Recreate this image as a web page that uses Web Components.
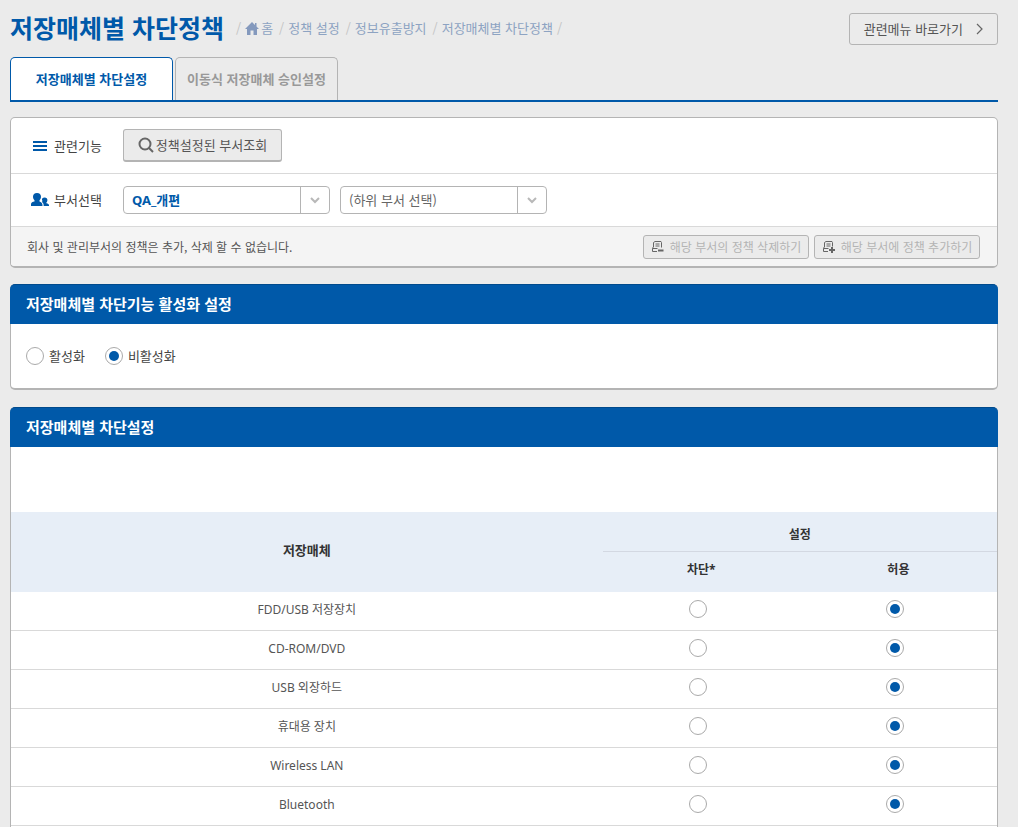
<!DOCTYPE html>
<html lang="ko">
<head>
<meta charset="utf-8">
<meta name="viewport" content="width=device-width, initial-scale=1">
<title>저장매체별 차단정책</title>
<style>
  :root {
    --blue: #0059a9;
    --page: #ebebeb;
    --line: #b4b4b4;
    --rule: #d9d9d9;
    --text: #555;
    --latin-first: "Noto Sans", "Noto Sans CJK KR", sans-serif;
  }
  * { box-sizing: border-box; }
  body {
    margin: 0;
    background: var(--page);
    color: var(--text);
    font: 13px/20px "Noto Sans CJK KR", "Noto Sans", sans-serif;
  }
</style>
</head>
<body>
<policy-page></policy-page>

<script>
const define = (name, html, setup) => {
  const template = document.createElement('template');
  template.innerHTML = `<style>
    *, :host { box-sizing: border-box; }
    button, select, input { font: inherit; color: inherit; margin: 0; }
    svg { display: block; flex: none; }
    input[type=radio] {
      appearance: none; flex: none; width: 18px; height: 18px; padding: 3px;
      border: 1px solid #aaa; border-radius: 50%; background: #fff;
    }
    input[type=radio]:checked::before {
      content: ""; display: block; width: 10px; height: 10px; border-radius: 50%; background: var(--blue);
    }
  </style>` + html;
  customElements.define(name, class extends HTMLElement {
    constructor() {
      super();
      this.attachShadow({ mode: 'open' }).append(template.content.cloneNode(true));
    }
    connectedCallback() { if (setup) setup(this.shadowRoot, this); }
  });
};

define('crumb-trail', `
  <style>
    :host { display: block; color: #8da3c2; }
    ol { display: flex; gap: 6px; margin: 0; padding: 0; list-style: none; }
    li { display: flex; align-items: center; gap: 4px; white-space: nowrap; }
    li::before, li:last-child::after { content: "/"; color: #c4c4c4; }
    a { display: flex; align-items: center; gap: 2px; color: inherit; text-decoration: none; }
  </style>
  <nav aria-label="현재 위치"><ol>
    <li><a href="#"><svg width="14" height="13" viewBox="0 0 14 13" fill="#8499bd"><path d="M7 0 0 7h2v6h3.500V8.500h3V13H12V7h2L11.500 4.500V1H10v2z"/></svg>홈</a></li>
    <li><a href="#">정책 설정</a></li>
    <li><a href="#">정보유출방지</a></li>
    <li><a href="#">저장매체별 차단정책</a></li>
  </ol></nav>`);

define('page-header', `
  <style>
    :host { display: flex; align-items: center; gap: 12px; height: 32px; }
    h1 { margin: 0; font-size: 25px; line-height: 32px; font-weight: 700; color: var(--blue); white-space: nowrap; }
    h1 { padding-bottom: 4px; }
    crumb-trail { padding-bottom: 2px; }
    button {
      display: flex; align-items: center; gap: 13px; height: 32px; margin-left: auto; padding: 0 14px;
      border: 1px solid var(--line); border-radius: 3px; background: none; white-space: nowrap;
    }
  </style>
  <h1>저장매체별 차단정책</h1>
  <crumb-trail></crumb-trail>
  <button type="button">관련메뉴 바로가기<svg width="7" height="12" viewBox="0 0 7 12" fill="none" stroke="#666" stroke-width="1.200"><path d="m1 1 5 5-5 5"/></svg></button>`);

define('tab-strip', `
  <style>
    :host { display: flex; gap: 2px; height: 45px; border-bottom: 2px solid var(--blue); }
    button {
      width: 163px; height: 43px; padding: 0; border: 1px solid var(--line); border-bottom: 0; border-radius: 5px 5px 0 0;
      background: var(--page); color: #999; font-weight: 700; white-space: nowrap;
    }
    button[aria-selected=true] { border-color: var(--blue); background: #fff; color: var(--blue); }
  </style>
  <button type="button" role="tab" aria-selected="true">저장매체별 차단설정</button>
  <button type="button" role="tab" aria-selected="false">이동식 저장매체 승인설정</button>`,
  (root, host) => host.setAttribute('role', 'tablist'));

define('panel-card', `
  <style>
    :host {
      display: block; overflow: hidden; background: #fff;
      border: 1px solid var(--line); border-bottom-width: 2px; border-radius: 5px;
    }
  </style>
  <slot></slot>`);

define('titled-card', `
  <style>
    :host { display: flex; flex-direction: column; }
    h2 {
      margin: 0; padding: 0 16px 2px; border-top: 1px solid #004a8c; border-radius: 5px 5px 0 0;
      background: var(--blue); color: #fff; font-size: 15px; line-height: 37px; font-weight: 700;
    }
    div { flex: 1; border: 1px solid var(--line); border-width: 0 1px 2px; border-radius: 0 0 5px 5px; background: #fff; }
    :host([open-end]) div { border-bottom: 0; border-radius: 0; }
  </style>
  <h2></h2><div><slot></slot></div>`,
  (root, host) => { root.querySelector('h2').textContent = host.getAttribute('heading'); });

define('select-box', `
  <style>
    :host { display: block; position: relative; width: 207px; }
    select {
      appearance: none; display: block; width: 100%; height: 28px; padding: 0 36px 0 8px;
      border: 1px solid var(--line); border-radius: 4px; background: #fff; color: #666;
    }
    :host([strong]) select { color: var(--blue); font-weight: 700; font-family: var(--latin-first); }
    span {
      position: absolute; inset: 1px 1px 1px auto; width: 29px; display: grid; place-items: center;
      border-left: 1px solid var(--line); pointer-events: none;
    }
  </style>
  <select><option></option></select>
  <span><svg width="10" height="7" viewBox="0 0 10 7" fill="none" stroke="#b8b8b8" stroke-width="2"><path d="m1 1 4 4 4-4"/></svg></span>`,
  (root, host) => {
    root.querySelector('select').setAttribute('aria-label', host.getAttribute('label'));
    root.querySelector('option').textContent = host.getAttribute('value');
  });

define('department-panel', `
  <style>
    :host { display: block; }
    .row { display: flex; align-items: center; gap: 10px; padding: 0 20px; border-bottom: 1px solid var(--rule); }
    .tools { height: 56px; }
    .pick { height: 53px; }
    .name { display: flex; align-items: center; gap: 5px; width: 82px; white-space: nowrap; color: #444; }
    .search {
      display: flex; align-items: center; justify-content: center; gap: 2px; width: 159px; height: 33px; padding: 0;
      border: 1px solid var(--line); border-bottom-width: 2px; border-radius: 3px; background: var(--page); white-space: nowrap;
    }
    .foot {
      display: flex; align-items: center; gap: 5px; height: 39px; padding: 0 17px 0 16px;
      background: #f4f4f4; font-size: 12px;
    }
    p { margin: 0 auto 0 0; }
    .foot button {
      display: flex; align-items: center; justify-content: center; gap: 6px; width: 166px; height: 24px; padding: 0;
      border: 1px solid var(--line); border-radius: 3px; background: var(--page); color: #b4b4b4; white-space: nowrap;
    }
  </style>
  <panel-card>
    <div class="row tools">
      <span class="name"><svg width="18" height="12" viewBox="0 0 18 12" fill="#0059a9"><path d="M2 1h14v2H2zM2 5h14v2H2zM2 9h14v2H2z"/></svg>관련기능</span>
      <button class="search" type="button"><svg width="16" height="16" viewBox="0 0 16 16" fill="none" stroke="#666" stroke-width="2"><circle cx="7" cy="7" r="5.500"/><path d="m11 11 4 4"/></svg>정책설정된 부서조회</button>
    </div>
    <div class="row pick">
      <span class="name"><svg width="18" height="14" viewBox="0 0 18 14" fill="#0059a9"><path d="M6 0c2.600 0 4 1.600 4 3.800 0 1.500-.6 2.800-1.500 3.500v1.100c1.500.4 2.500 1.200 2.800 2.600l.2 2H0v-2c.3-1.600 1.500-2.200 3.500-2.600V7.300C2.600 6.600 2 5.300 2 3.800 2 1.600 3.400 0 6 0z"/><path d="M13.600 4.500c1.900 0 2.800 1.100 2.800 2.600 0 1-.4 1.900-1 2.400v.7c1.600.3 2.500.8 2.600 1.800v1h-5.300l-.2-2c-.2-.9-.8-1.600-1.500-2.100.2-.4.400-.6.600-.8-.4-.5-.6-1-.6-1.700 0-1 .9-1.900 2.600-1.900z"/></svg>부서선택</span>
      <select-box strong label="부서선택" value="QA_개편"></select-box>
      <select-box label="하위 부서" value="(하위 부서 선택)"></select-box>
    </div>
    <div class="foot">
      <p>회사 및 관리부서의 정책은 추가, 삭제 할 수 없습니다.</p>
      <button type="button" disabled><svg width="13" height="12" viewBox="0 0 13 12" fill="none" stroke="#666"><path d="M2.500 6V1.500L4 .5h6l.5 1v5M4.500 3h4M4.500 5h4M6.500 7.500h-5v3H6M1.500 7.500l1-2"/><path d="M7 9.500h5.500" stroke-width="2"/></svg>해당 부서의 정책 삭제하기</button>
      <button type="button" disabled><svg width="13" height="12" viewBox="0 0 13 12" fill="none" stroke="#666"><path d="M2.500 6V1.500L4 .5h6l.5 1v4M4.500 3h4M4.500 5h4M6.500 7.500h-5v3H6M1.500 7.500l1-2"/><path d="M7 9h6M10 6v6" stroke-width="2"/></svg>해당 부서에 정책 추가하기</button>
    </div>
  </panel-card>`);

define('activation-choice', `
  <style>
    :host { display: flex; gap: 20px; padding: 22px 15px; }
    label { display: flex; align-items: center; gap: 5px; color: #444; }
  </style>
  <label><input type="radio" name="active">활성화</label>
  <label><input type="radio" name="active" checked>비활성화</label>`);

define('media-table', `
  <style>
    :host { display: block; padding-top: 65px; font-family: var(--latin-first); font-size: 12px; }
    table { width: 100%; table-layout: fixed; border-collapse: separate; border-spacing: 0; }
    .media { width: 60%; }
    th, td { height: 39px; padding: 0; text-align: center; vertical-align: middle; }
    thead th { height: 40px; background: #e7eef7; color: #333; font-weight: 700; }
    thead th[rowspan] { padding-bottom: 4px; font-size: 13px; }
    thead th[colspan] { padding-top: 6px; border-bottom: 1px solid #d3d8e2; }
    thead tr + tr th { padding-bottom: 4px; }
    tbody th, td { border-bottom: 1px solid var(--rule); font-weight: 400; }
    tbody th { padding-bottom: 2px; }
    td { padding: 0 6px 6px 0; }
    input { display: inline-block; vertical-align: middle; }
  </style>
  <table>
    <colgroup><col class="media"><col><col></colgroup>
    <thead>
      <tr><th rowspan="2" scope="col">저장매체</th><th colspan="2" scope="colgroup">설정</th></tr>
      <tr><th scope="col">차단*</th><th scope="col">허용</th></tr>
    </thead>
    <tbody></tbody>
  </table>`,
  root => {
    const media = ['FDD/USB 저장장치', 'CD-ROM/DVD', 'USB 외장하드', '휴대용 장치', 'Wireless LAN', 'Bluetooth'];
    root.querySelector('tbody').innerHTML = media.map((name, i) => `<tr>
      <th scope="row">${name}</th>
      <td><input type="radio" name="media${i}" aria-label="${name} 차단"></td>
      <td><input type="radio" name="media${i}" aria-label="${name} 허용" checked></td>
    </tr>`).join('');
  });

define('policy-page', `
  <style>
    :host { display: flex; flex-direction: column; min-height: 100vh; padding: 13px 20px 0 10px; }
    tab-strip { margin: 12px 0 15px; }
    department-panel { margin-bottom: 16px; }
    titled-card + titled-card { margin-top: 17px; }
    titled-card[open-end] { flex: 1; }
  </style>
  <page-header></page-header>
  <tab-strip></tab-strip>
  <department-panel></department-panel>
  <titled-card heading="저장매체별 차단기능 활성화 설정"><activation-choice></activation-choice></titled-card>
  <titled-card open-end heading="저장매체별 차단설정"><media-table></media-table></titled-card>`);
</script>
</body>
</html>
